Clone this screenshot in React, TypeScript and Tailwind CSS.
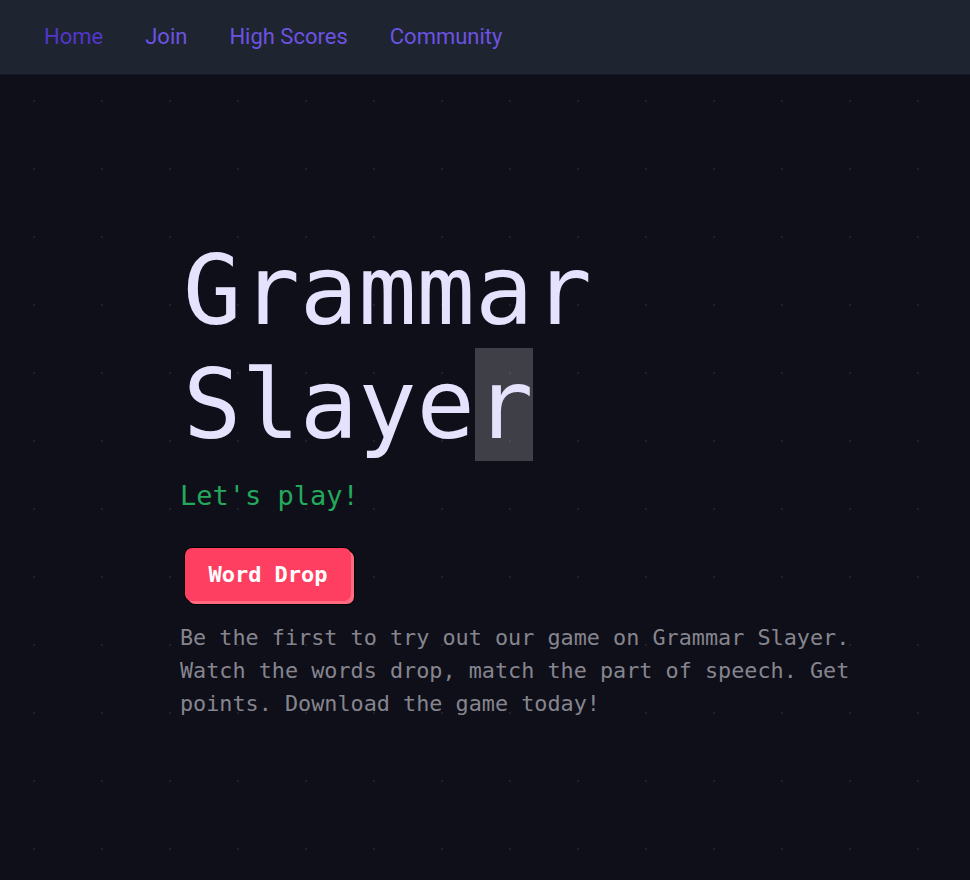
const NAV_LINKS = [
  { label: "Home", active: true },
  { label: "Join", active: false },
  { label: "High Scores", active: false },
  { label: "Community", active: false },
];

const mono = "font-['DejaVu_Sans_Mono','Liberation_Mono',monospace]";

export default function App() {
  return (
    <div className="min-h-[880px] bg-[#0e0f19]">
      {/* Top nav */}
      <nav className="h-[75px] bg-[#1e2430] border-b border-[#161a22] flex items-center gap-[42px] pl-[44px] pb-[2px] font-['Roboto',sans-serif] text-[22px]">
        {NAV_LINKS.map((link) => (
          <a
            key={link.label}
            href="#"
            className={link.active ? "text-[#5237cc]" : "text-[#6c53e2]"}
          >
            {link.label}
          </a>
        ))}
      </nav>

      {/* Hero with dotted grid */}
      <main className="min-h-[805px] bg-[radial-gradient(circle,#1f2029_1.2px,transparent_1.5px)] bg-[length:68px_68px] bg-[position:0px_-8px]">
        <div className={`pl-[180px] pt-[159px] ${mono}`}>
          <h1 className="ml-[3px] text-[97px] leading-[114px] text-[#e4e2fd]">
            <span className="block">Grammar</span>
            <span className="block">
              Slaye<span className="bg-white/20">r</span>
            </span>
          </h1>

          <p className="mt-[14px] text-[27px] leading-[40px] text-[#24a85c]">Let's play!</p>

          <button
            type="button"
            className="mt-[32px] ml-[5px] h-[53px] w-[166px] rounded-[7px] bg-[#ff3f61] text-white font-bold text-[22px] shadow-[3px_3px_0_#ff6b80,0_0_0_1px_#000,3px_3px_0_1px_#000]"
          >
            Word Drop
          </button>

          <p className="mt-[20px] w-[700px] text-[21.8px] leading-[33px] text-[#86858e]">
            Be the first to try out our game on Grammar Slayer. Watch the words drop, match the
            part of speech. Get points. Download the game today!
          </p>
        </div>
      </main>
    </div>
  );
}
